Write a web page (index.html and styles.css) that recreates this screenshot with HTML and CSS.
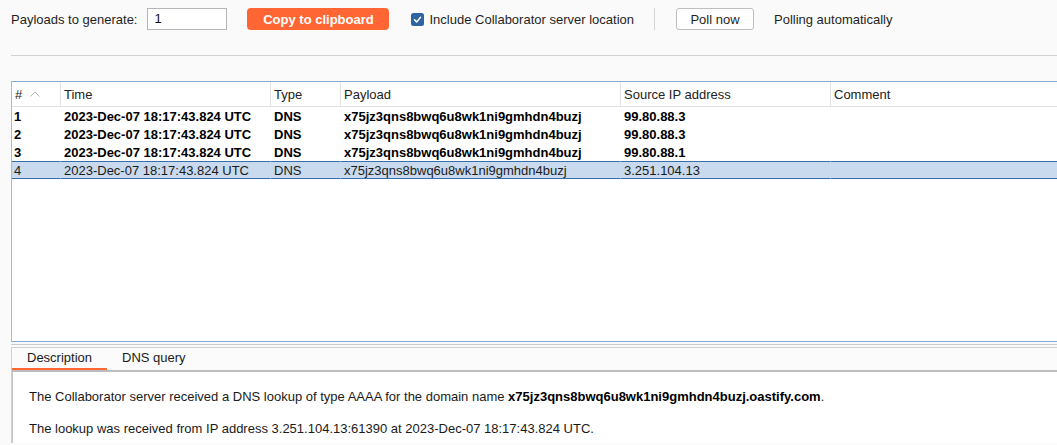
FILE: index.html
```html
<!DOCTYPE html>
<html>
<head>
<meta charset="utf-8">
<link rel="stylesheet" href="styles.css">
</head>
<body>
<div class="toolbar">
  <span class="lbl">Payloads to generate:</span>
  <div class="num-input">1</div>
  <button class="btn-primary">Copy to clipboard</button>
  <span class="check">
    <svg width="13" height="13" viewBox="0 0 13 13"><rect x="0" y="0" width="13" height="13" rx="2.5" fill="#2e64a0"/><polyline points="3.5,6.8 5.6,8.9 9.6,4.2" fill="none" stroke="#fff" stroke-width="1.5" stroke-linecap="round" stroke-linejoin="round"/></svg>
  </span>
  <span class="check-lbl">Include Collaborator server location</span>
  <span class="vsep"></span>
  <button class="btn">Poll now</button>
  <span class="status">Polling automatically</span>
</div>
<div class="hr"></div>
<div class="table-wrap">
  <table class="grid">
    <colgroup>
      <col class="c1"><col class="c2"><col class="c3"><col class="c4"><col class="c5"><col class="c6">
    </colgroup>
    <thead>
      <tr>
        <th class="first"># <svg class="sort" width="10" height="6" viewBox="0 0 10 6"><polyline points="0.5,5.5 5,1 9.5,5.5" fill="none" stroke="#b4b4b4" stroke-width="1"/></svg></th>
        <th>Time</th>
        <th>Type</th>
        <th>Payload</th>
        <th>Source IP address</th>
        <th>Comment</th>
      </tr>
    </thead>
    <tbody>
      <tr class="b"><td>1</td><td>2023-Dec-07 18:17:43.824 UTC</td><td>DNS</td><td>x75jz3qns8bwq6u8wk1ni9gmhdn4buzj</td><td>99.80.88.3</td><td></td></tr>
      <tr class="b"><td>2</td><td>2023-Dec-07 18:17:43.824 UTC</td><td>DNS</td><td>x75jz3qns8bwq6u8wk1ni9gmhdn4buzj</td><td>99.80.88.3</td><td></td></tr>
      <tr class="b"><td>3</td><td>2023-Dec-07 18:17:43.824 UTC</td><td>DNS</td><td>x75jz3qns8bwq6u8wk1ni9gmhdn4buzj</td><td>99.80.88.1</td><td></td></tr>
      <tr class="sel"><td>4</td><td>2023-Dec-07 18:17:43.824 UTC</td><td>DNS</td><td>x75jz3qns8bwq6u8wk1ni9gmhdn4buzj</td><td>3.251.104.13</td><td></td></tr>
    </tbody>
  </table>
</div>
<div class="split"></div>
<div class="tabpane">
  <div class="tabs">
    <div class="tab active">Description</div>
    <div class="tab">DNS query</div>
  </div>
  <div class="content">
    <p>The Collaborator server received a DNS lookup of type AAAA for the domain name <b>x75jz3qns8bwq6u8wk1ni9gmhdn4buzj.oastify.com</b>.</p>
    <p>The lookup was received from IP address 3.251.104.13:61390 at 2023-Dec-07 18:17:43.824 UTC.</p>
  </div>
</div>
</body>
</html>
```
FILE: styles.css
```css
html, body {
  margin: 0;
  padding: 0;
  background: #fafafa;
  font-family: "Liberation Sans", Arial, sans-serif;
  font-size: 13px;
  color: #1f1f1f;
  overflow: hidden;
}
.toolbar {
  display: flex;
  align-items: center;
  height: 22px;
  margin-top: 8px;
  padding-left: 11px;
  white-space: nowrap;
}
.lbl { margin-right: 10px; }
.num-input {
  box-sizing: border-box;
  width: 80px;
  height: 22px;
  border: 1px solid #b4b4b4;
  background: #fff;
  padding-left: 6px;
  line-height: 20px;
  color: #111;
}
.btn-primary {
  box-sizing: border-box;
  margin-left: 20px;
  width: 142px;
  height: 22px;
  border: none;
  border-radius: 4px;
  background: #ff6633;
  color: #fff;
  font-family: inherit;
  font-size: 13px;
  font-weight: bold;
  padding: 0;
}
.check {
  margin-left: 22px;
  width: 13px;
  height: 13px;
  display: flex;
}
.check-lbl { margin-left: 5px; }
.vsep {
  margin-left: 20px;
  width: 1px;
  height: 22px;
  background: #d4d4d4;
}
.btn {
  box-sizing: border-box;
  margin-left: 21px;
  width: 78px;
  height: 22px;
  border: 1px solid #bdbdbd;
  border-radius: 3px;
  background: #fff;
  color: #1f1f1f;
  font-family: inherit;
  font-size: 13px;
  padding: 0;
}
.status { margin-left: 20px; }
.hr {
  margin: 25px 0 0 11px;
  height: 1px;
  background: #d2d2d2;
}
.table-wrap {
  margin: 25px 0 0 11px;
  height: 259px;
  border-top: 1px solid #86aad6;
  border-left: 1px solid #9fbbe0;
  border-bottom: 1px solid #86aad6;
  background: #fff;
  overflow: hidden;
}
.grid {
  border-collapse: separate;
  border-spacing: 0;
  table-layout: fixed;
  width: 1100px;
}
.c1 { width: 48px; }
.c2 { width: 210px; }
.c3 { width: 70px; }
.c4 { width: 280px; }
.c5 { width: 210px; }
.c6 { width: 282px; }
.grid th {
  height: 24px;
  padding: 0 0 0 3px;
  text-align: left;
  font-weight: normal;
  color: #222;
  border-left: 1px solid #e2e2e2;
  border-bottom: 1px solid #e2e2e2;
  white-space: nowrap;
  overflow: hidden;
}
.grid th.first { border-left: none; }
.sort { margin-left: 4px; vertical-align: 2px; }
.grid td {
  height: 18px;
  padding: 0 0 0 3px;
  border-left: 1px solid transparent;
  white-space: nowrap;
  overflow: hidden;
  color: #111;
  box-sizing: border-box;
}
.grid td:first-child { border-left: none; padding-left: 2px; }
.grid tr.b td { font-weight: bold; color: #000; }
.grid tr.sel td {
  background: #c9daef;
  border-top: 1px solid #3b6ea8;
  border-bottom: 1px solid #3b6ea8;
  height: 18px;
  color: #1a1a1a;
}
.split {
  margin: 2px 0 0 11px;
  height: 1px;
  background: #cbcbcb;
}
.tabpane {
  margin: 2px 0 0 11px;
  border-top: 1px solid #cfcfcf;
  border-left: 1px solid #cfcfcf;
}
.tabs {
  display: flex;
  height: 22px;
  background: #fbfbfb;
}
.tab {
  box-sizing: border-box;
  padding: 0 15px;
  height: 22px;
  line-height: 19px;
  color: #1a1a1a;
}
.tab.active { border-bottom: 2px solid #ff6633; }
.content {
  border-top: 2px solid #bdbdbd;
  border-left: 1px solid #c4c4c4;
  background: #fff;
  padding: 17px 0 0 16px;
  height: 54px;
  overflow: hidden;
}
.content p {
  margin: 0 0 16px 0;
  line-height: 16px;
  color: #1a1a1a;
}
.content b { color: #000; }
```
